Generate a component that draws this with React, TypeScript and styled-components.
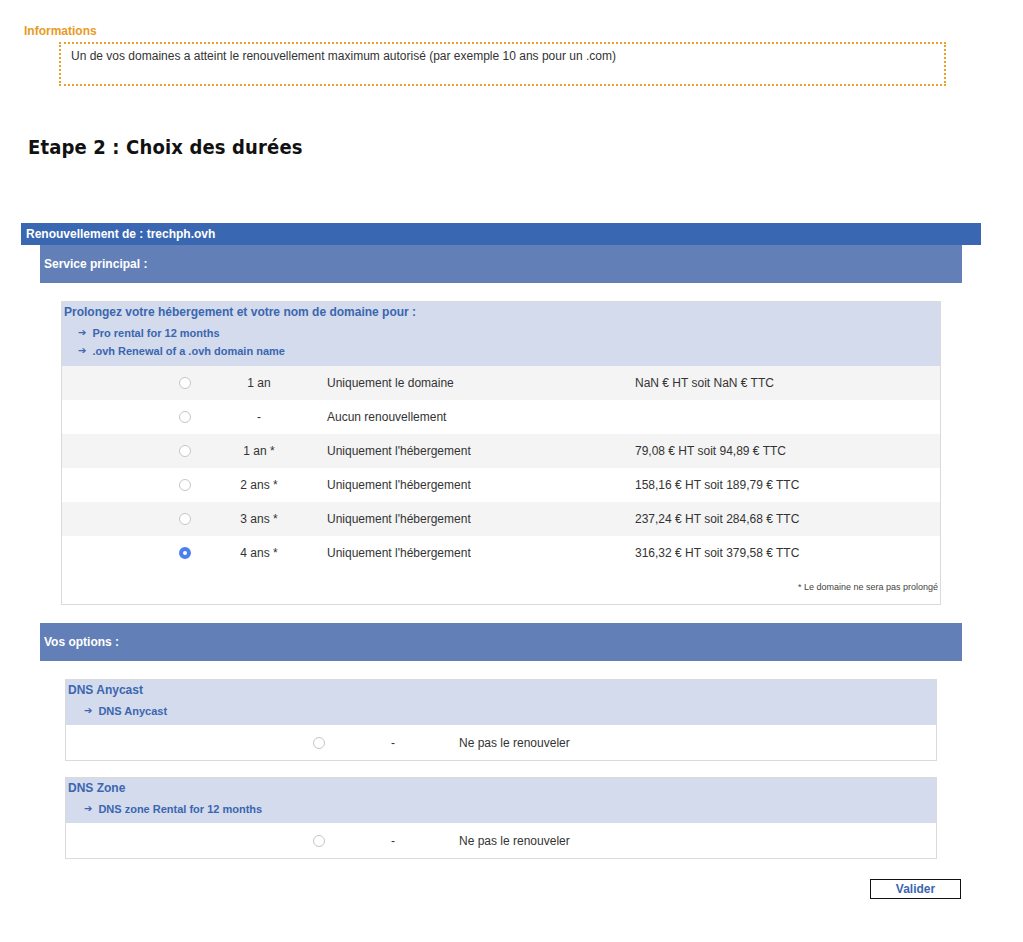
import React from 'react';
import styled, { createGlobalStyle } from 'styled-components';

const GlobalStyle = createGlobalStyle`
  body {
    margin: 0;
    background: #ffffff;
    font-family: "Liberation Sans", Arial, sans-serif;
    font-size: 12px;
    color: #333333;
  }
`;

const Page = styled.div`
  padding-top: 24px;
  width: 1023px;
`;

const InfoLabel = styled.div`
  margin-left: 24px;
  font-weight: bold;
  font-size: 12px;
  line-height: 14px;
  color: #e89b1f;
`;

const InfoBox = styled.div`
  margin: 4px 0 0 59px;
  width: 887px;
  height: 44px;
  box-sizing: border-box;
  border: 2px dotted #e9a22c;
  padding: 5px 10px;
  line-height: 14px;
  color: #333333;
`;

const StepTitle = styled.h1`
  margin: 49px 0 0 28px;
  font-family: "DejaVu Sans Condensed", "DejaVu Sans", sans-serif;
  font-weight: bold;
  font-size: 20px;
  line-height: 24px;
  letter-spacing: 0.15px;
  color: #111111;
`;

const Renewal = styled.section`
  margin: 64px 0 0 21px;
  width: 960px;
`;

const RenewalHeader = styled.div`
  height: 22px;
  line-height: 22px;
  padding-left: 5px;
  background: #3a67b1;
  color: #ffffff;
  font-weight: bold;
`;

const RenewalBody = styled.div`
  margin-left: 19px;
  width: 922px;
`;

const SectionBar = styled.div<{ $top?: number }>`
  height: 38px;
  line-height: 38px;
  padding-left: 4px;
  margin-top: ${(p) => p.$top ?? 0}px;
  background: #637fb7;
  color: #ffffff;
  font-weight: bold;
`;

const Panel = styled.div<{ $left: number; $width: number; $top: number }>`
  margin: ${(p) => p.$top}px 0 0 ${(p) => p.$left}px;
  width: ${(p) => p.$width}px;
  box-sizing: border-box;
  border: 1px solid #dadada;
  background: #ffffff;
`;

const PanelHead = styled.div<{ $pad: number; $bottom: number }>`
  background: #d3dbec;
  padding: 3px 0 ${(p) => p.$bottom}px ${(p) => p.$pad}px;
  color: #3b66b0;
  font-weight: bold;
`;

const HeadTitle = styled.div`
  line-height: 14px;
`;

const HeadItems = styled.div<{ $gap: number }>`
  margin-top: ${(p) => p.$gap}px;
`;

const HeadItem = styled.div<{ $indent: number }>`
  display: flex;
  align-items: center;
  gap: 6px;
  margin-left: ${(p) => p.$indent}px;
  font-size: 11px;
  line-height: 18px;
`;

const Arrow = styled.span`
  font-size: 10px;
  font-family: "DejaVu Sans", sans-serif;
`;

const DurationRow = styled.div<{ $shade: boolean }>`
  display: grid;
  grid-template-columns: 74px 74px 339px 1fr;
  align-items: center;
  height: 34px;
  padding-left: 86px;
  background: ${(p) => (p.$shade ? '#f4f4f4' : '#ffffff')};
`;

const OptionRow = styled.div`
  display: grid;
  grid-template-columns: 74px 74px 1fr;
  align-items: center;
  height: 35px;
  padding-left: 216px;
  background: #ffffff;
`;

const Cell = styled.div<{ $center?: boolean; $pad?: number }>`
  display: flex;
  justify-content: ${(p) => (p.$center ? 'center' : 'flex-start')};
  padding-left: ${(p) => p.$pad ?? 0}px;
  white-space: nowrap;
`;

const Radio = styled.span<{ $checked?: boolean }>`
  display: inline-block;
  width: 12px;
  height: 12px;
  box-sizing: border-box;
  border-radius: 50%;
  border: ${(p) => (p.$checked ? '4px solid #4a7ff0' : '1px solid #c6c6c6')};
  background: #ffffff;
`;

const Footnote = styled.div`
  height: 34px;
  line-height: 34px;
  text-align: right;
  padding-right: 2px;
  font-size: 9px;
  color: #444444;
`;

const Actions = styled.div`
  display: flex;
  justify-content: flex-end;
  margin: 20px 1px 40px 0;
`;

const ValidateButton = styled.button`
  width: 91px;
  height: 20px;
  padding: 0;
  border: 1px solid #111111;
  background: #ffffff;
  font-family: "Liberation Sans", Arial, sans-serif;
  font-weight: bold;
  font-size: 12px;
  color: #3b66b0;
  cursor: pointer;
`;

const durations = [
  { years: '1 an', label: 'Uniquement le domaine', price: 'NaN € HT soit NaN € TTC' },
  { years: '-', label: 'Aucun renouvellement', price: '' },
  { years: '1 an *', label: "Uniquement l'hébergement", price: '79,08 € HT soit 94,89 € TTC' },
  { years: '2 ans *', label: "Uniquement l'hébergement", price: '158,16 € HT soit 189,79 € TTC' },
  { years: '3 ans *', label: "Uniquement l'hébergement", price: '237,24 € HT soit 284,68 € TTC' },
  { years: '4 ans *', label: "Uniquement l'hébergement", price: '316,32 € HT soit 379,58 € TTC', checked: true },
];

const options = [
  { name: 'DNS Anycast', detail: 'DNS Anycast', top: 18 },
  { name: 'DNS Zone', detail: 'DNS zone Rental for 12 months', top: 16 },
];

const App: React.FC = () => {
  return (
    <Page>
      <GlobalStyle />
      <InfoLabel>Informations</InfoLabel>
      <InfoBox>Un de vos domaines a atteint le renouvellement maximum autorisé (par exemple 10 ans pour un .com)</InfoBox>

      <StepTitle>Etape 2 : Choix des durées</StepTitle>

      <Renewal>
        <RenewalHeader>Renouvellement de : trechph.ovh</RenewalHeader>
        <RenewalBody>
          <SectionBar>Service principal :</SectionBar>

          <Panel $left={21} $width={880} $top={18}>
            <PanelHead $pad={2} $bottom={6}>
              <HeadTitle>Prolongez votre hébergement et votre nom de domaine pour :</HeadTitle>
              <HeadItems $gap={5}>
                <HeadItem $indent={14}>
                  <Arrow>➔</Arrow>Pro rental for 12 months
                </HeadItem>
                <HeadItem $indent={14}>
                  <Arrow>➔</Arrow>.ovh Renewal of a .ovh domain name
                </HeadItem>
              </HeadItems>
            </PanelHead>
            {durations.map((d, i) => (
              <DurationRow key={i} $shade={i % 2 === 0}>
                <Cell $center>
                  <Radio $checked={d.checked} />
                </Cell>
                <Cell $center>{d.years}</Cell>
                <Cell $pad={31}>{d.label}</Cell>
                <Cell>{d.price}</Cell>
              </DurationRow>
            ))}
            <Footnote>* Le domaine ne sera pas prolongé</Footnote>
          </Panel>

          <SectionBar $top={18}>Vos options :</SectionBar>

          {options.map((o) => (
            <Panel key={o.name} $left={25} $width={872} $top={o.top}>
              <PanelHead $pad={2} $bottom={5}>
                <HeadTitle>{o.name}</HeadTitle>
                <HeadItems $gap={5}>
                  <HeadItem $indent={16}>
                    <Arrow>➔</Arrow>
                    {o.detail}
                  </HeadItem>
                </HeadItems>
              </PanelHead>
              <OptionRow>
                <Cell $center>
                  <Radio />
                </Cell>
                <Cell $center>-</Cell>
                <Cell $pad={29}>Ne pas le renouveler</Cell>
              </OptionRow>
            </Panel>
          ))}

          <Actions>
            <ValidateButton>Valider</ValidateButton>
          </Actions>
        </RenewalBody>
      </Renewal>
    </Page>
  );
};

export default App;
